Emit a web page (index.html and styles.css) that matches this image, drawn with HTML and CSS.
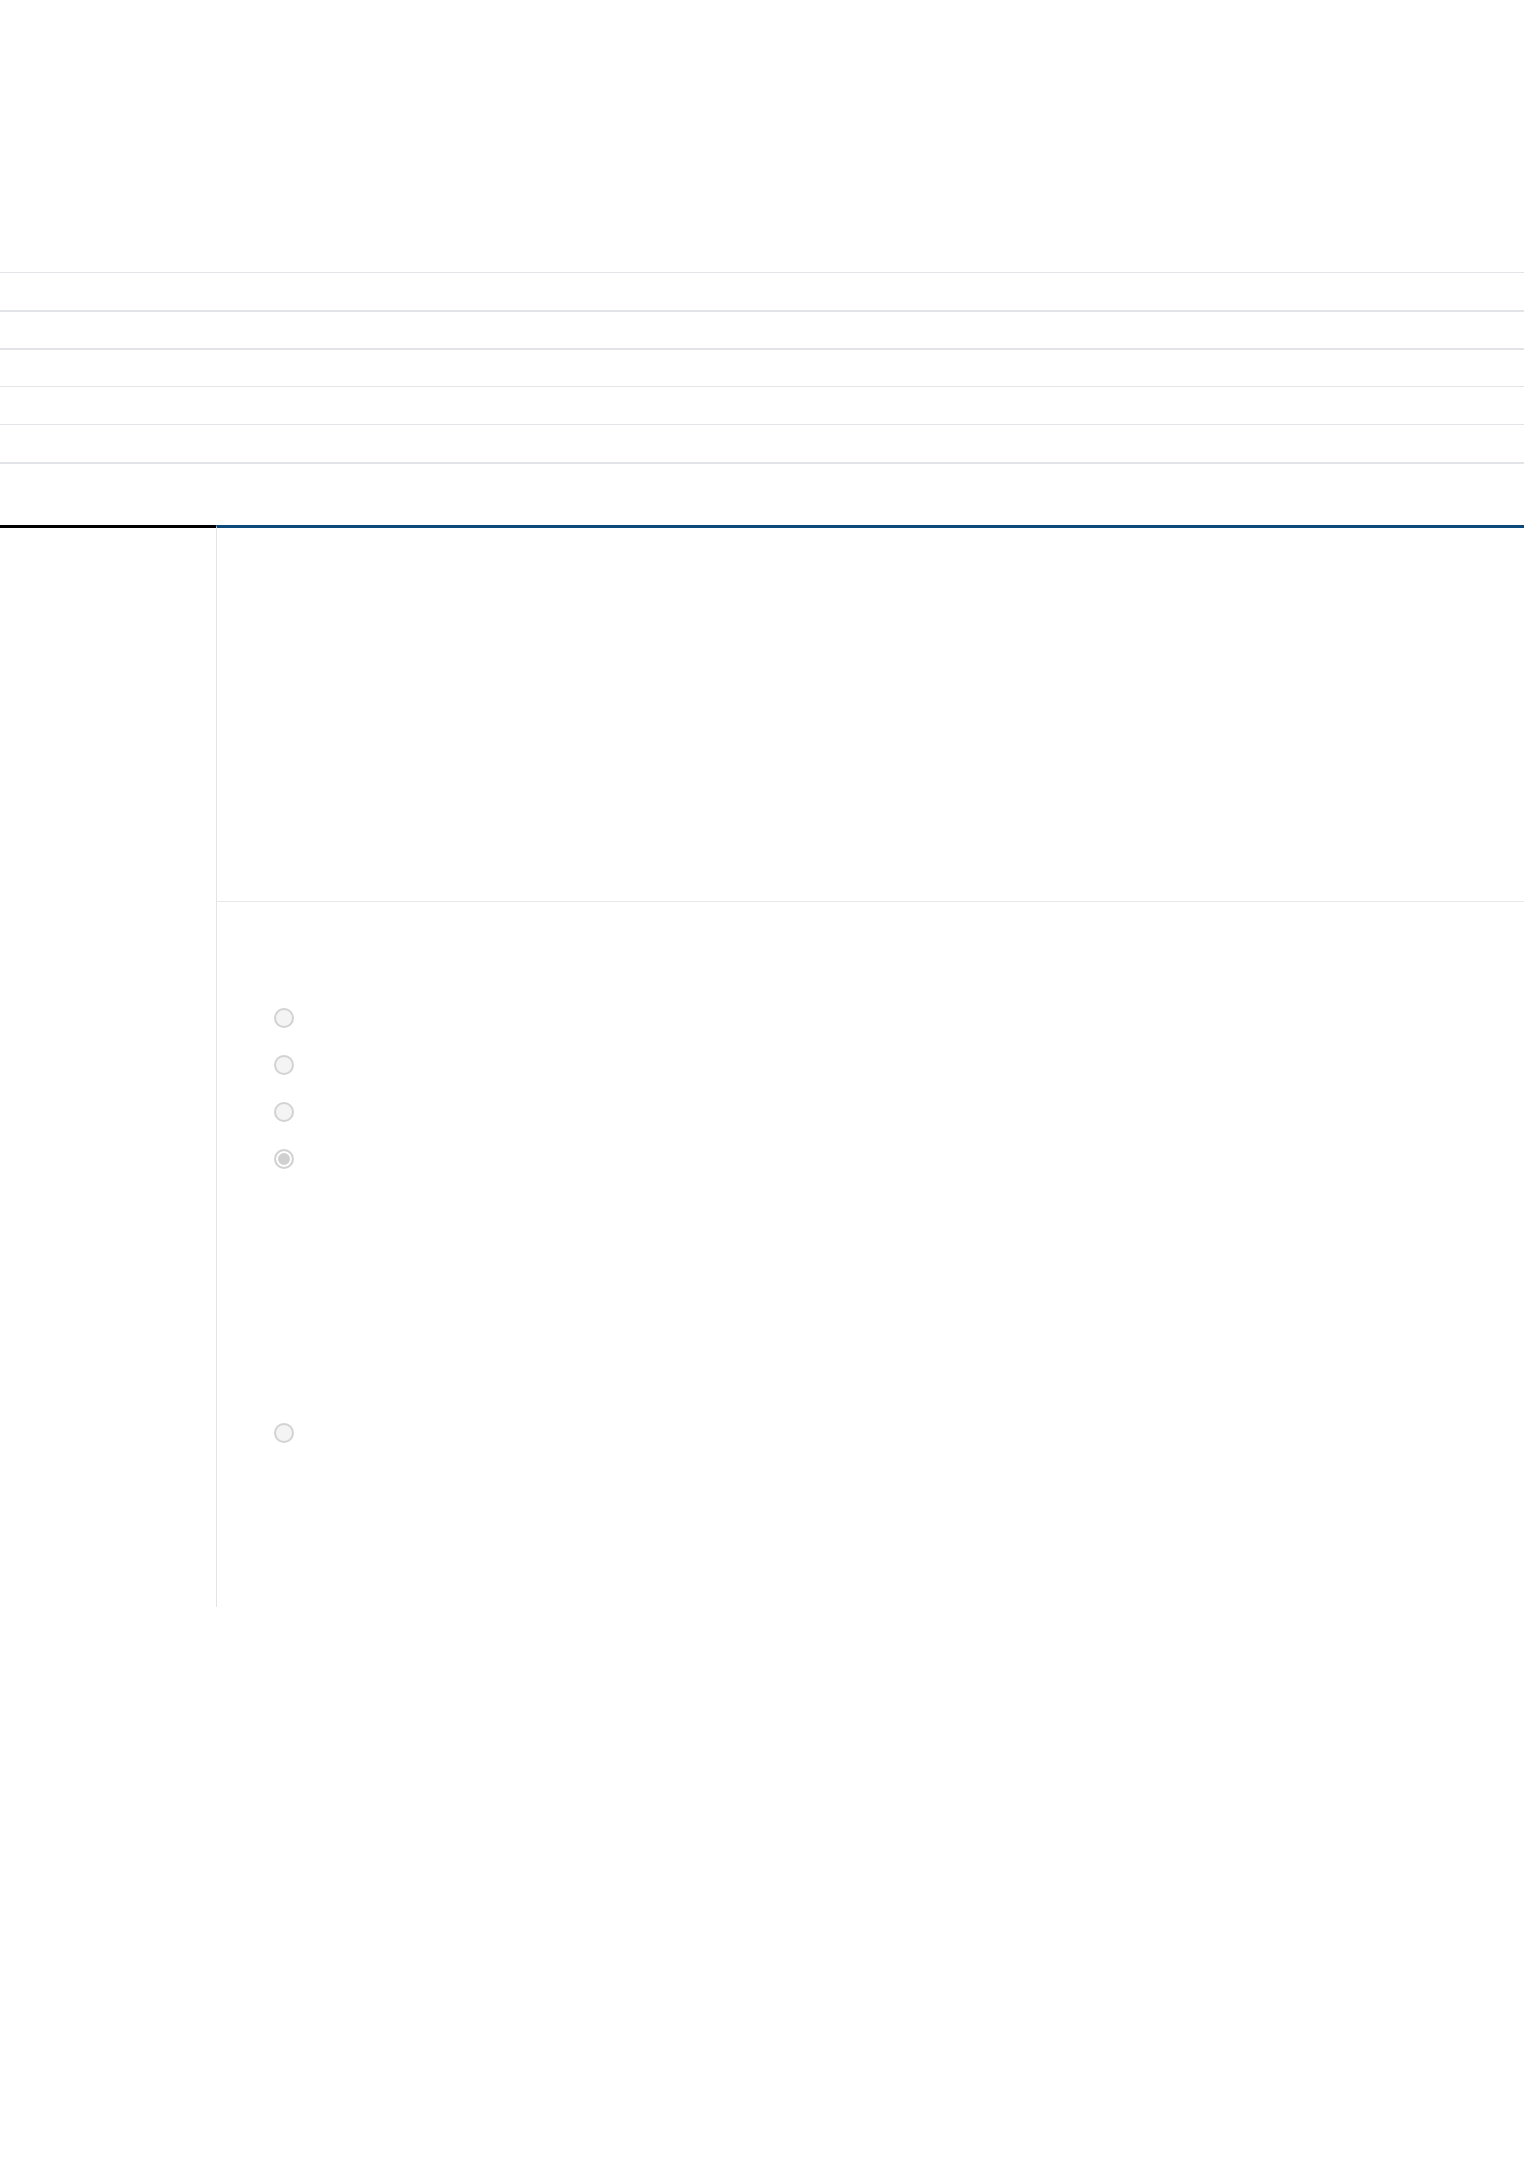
FILE: index.html
```html
<!DOCTYPE html>
<html lang="en">
<head>
  <meta charset="UTF-8" />
  <meta name="viewport" content="width=device-width, initial-scale=1" />
  <title>Survey</title>
  <link rel="stylesheet" href="styles.css">
</head>
<body>

  <header class="top"></header>

  <!-- summary rows -->
  <ul class="rows">
    <li class="row"></li>
    <li class="row row-strong"></li>
    <li class="row row-strong"></li>
    <li class="row"></li>
    <li class="row"></li>
  </ul>

  <main class="layout">
    <aside class="side"></aside>

    <section class="panel">
      <div class="panel-intro"></div>

      <form class="panel-form">
        <div class="options">
          <label class="option"><input type="radio" name="pick" disabled></label>
          <label class="option"><input type="radio" name="pick" disabled></label>
          <label class="option"><input type="radio" name="pick" disabled></label>
          <label class="option"><input type="radio" name="pick" checked disabled></label>
        </div>

        <div class="options-extra">
          <label class="option"><input type="radio" name="extra" disabled></label>
        </div>
      </form>
    </section>
  </main>

</body>
</html>
```

FILE: styles.css
```css
* {
  box-sizing: border-box;
  margin: 0;
  padding: 0;
}

body {
  font-family: 'Liberation Sans', Arial, sans-serif;
  background: #fff;
  color: #333;
  min-height: 2181px;
}

.top {
  height: 272px;
}

.rows {
  list-style: none;
  border-bottom: 2px solid #e1e3e7;
}

.row {
  height: 38px;
  border-top: 1px solid #e3e4e7;
}

.row-strong {
  border-top: 2px solid #e1e3e7;
}

.layout {
  display: grid;
  grid-template-columns: 216px 1fr;
  margin-top: 61px;
}

.side {
  border-top: 3px solid #000;
}

.panel {
  border-top: 3px solid #0b4a7b;
  border-left: 1px solid #e4e4e4;
}

.panel-intro {
  height: 374px;
  border-bottom: 1px solid #e8e8e8;
}

.panel-form {
  padding: 106px 0 164px 57px;
}

.option {
  display: flex;
  align-items: flex-start;
  height: 47px;
}

.options-extra {
  padding-top: 227px;
}

.options-extra .option {
  height: 20px;
}

input[type="radio"] {
  appearance: none;
  -webkit-appearance: none;
  width: 20px;
  height: 20px;
  border: 2px solid #d2d2d2;
  border-radius: 50%;
  background: #f4f4f4;
}

input[type="radio"]:checked {
  background: #d0d0d0;
  box-shadow: inset 0 0 0 2px #fff;
}
```
